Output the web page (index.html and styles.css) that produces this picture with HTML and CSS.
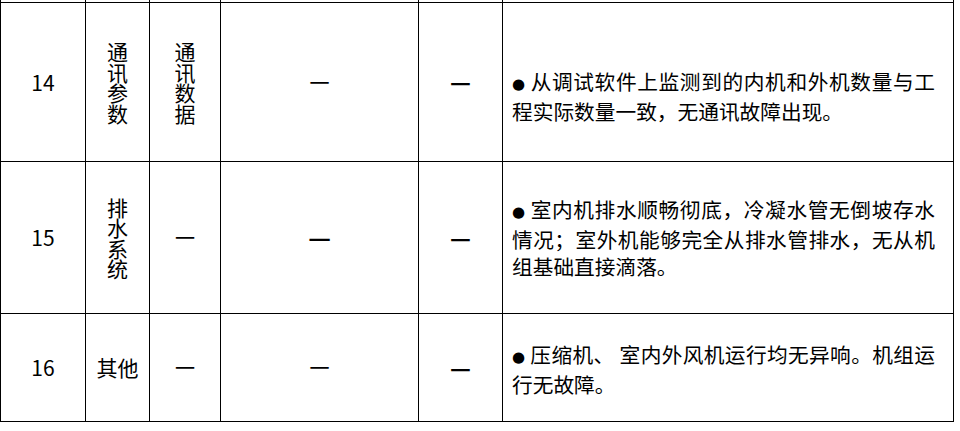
FILE: index.html
```html
<!DOCTYPE html>
<html lang="zh-CN">
<head>
<meta charset="utf-8">
<title>调试检查表</title>
<link rel="stylesheet" href="styles.css">
</head>
<body>
<table class="sheet">
  <colgroup>
    <col class="c-no">
    <col class="c-item">
    <col class="c-sub">
    <col class="c-std">
    <col class="c-res">
    <col class="c-desc">
  </colgroup>
  <tbody>
    <tr class="cut">
      <td></td><td></td><td></td><td></td><td></td><td></td>
    </tr>
    <tr class="r14">
      <td class="num">14</td>
      <td class="mid"><span class="stack">通讯参数</span></td>
      <td class="mid"><span class="stack">通讯数据</span></td>
      <td class="mid"><span class="thin">一</span></td>
      <td class="mid"><span class="thick">—</span></td>
      <td class="desc">
        <div class="txt shift">
          <div class="ln just"><span class="bul">●</span>从调试软件上监测到的内机和外机数量与工</div>
          <div class="ln">程实际数量一致，无通讯故障出现。</div>
        </div>
      </td>
    </tr>
    <tr class="r15">
      <td class="num">15</td>
      <td class="mid"><span class="stack">排水系统</span></td>
      <td class="mid"><span class="thin">一</span></td>
      <td class="mid"><span class="thick wide">—</span></td>
      <td class="mid"><span class="thick">—</span></td>
      <td class="desc">
        <div class="txt">
          <div class="ln just"><span class="bul">●</span>室内机排水顺畅彻底，冷凝水管无倒坡存水</div>
          <div class="ln just">情况；室外机能够完全从排水管排水，无从机</div>
          <div class="ln">组基础直接滴落。</div>
        </div>
      </td>
    </tr>
    <tr class="r16">
      <td class="num">16</td>
      <td class="mid">其他</td>
      <td class="mid"><span class="thin">一</span></td>
      <td class="mid"><span class="thin">一</span></td>
      <td class="mid"><span class="thick">—</span></td>
      <td class="desc">
        <div class="txt low">
          <div class="ln just"><span class="bul">●</span>压缩机、 室内外风机运行均无异响。机组运</div>
          <div class="ln">行无故障。</div>
        </div>
      </td>
    </tr>
  </tbody>
</table>
</body>
</html>
```

FILE: styles.css
```css
html, body {
  margin: 0;
  padding: 0;
  background: #fff;
}

body {
  font-family: "Noto Sans CJK SC", "Noto Sans", sans-serif;
  font-size: 21px;
  color: #000;
}

.sheet {
  border-collapse: collapse;
  border: none;
  table-layout: fixed;
  width: 954px;
  margin-top: -1px;
}

.c-no   { width: 85px; }
.c-item { width: 64px; }
.c-sub  { width: 71px; }
.c-std  { width: 198px; }
.c-res  { width: 84px; }
.c-desc { width: 451px; }

.sheet td {
  border: 1px solid #000;
  padding: 0;
  text-align: center;
  vertical-align: middle;
  line-height: 27px;
}

.sheet tr.cut td {
  border-top: none;
  height: 3px;
  line-height: 0;
}

.r14 td { height: 158px; }
.r15 td { height: 151px; }
.r16 td { height: 107px; }

.num {
  font-size: 21px;
}

.stack {
  display: inline-block;
  width: 1em;
  line-height: 20.5px;
  vertical-align: middle;
}

.thin {
  display: inline-block;
  font-size: 20px;
  line-height: 27px;
  font-weight: 400;
}

.thick {
  display: inline-block;
  font-size: 23px;
  line-height: 27px;
  font-weight: 700;
}

.thick.wide {
  font-size: 25px;
}

.sheet td.desc {
  text-align: left;
  padding: 0 18px 0 9px;
  font-size: 20.7px;
}

.txt.shift {
  padding-top: 28px;
}

.txt.low {
  padding-top: 4px;
}

.ln {
  white-space: nowrap;
}

.ln.just {
  text-align: justify;
  text-align-last: justify;
  white-space: normal;
}

.bul {
  display: inline-block;
  width: 18px;
  font-family: "DejaVu Sans", sans-serif;
  font-size: 15px;
  vertical-align: 1px;
}
```
